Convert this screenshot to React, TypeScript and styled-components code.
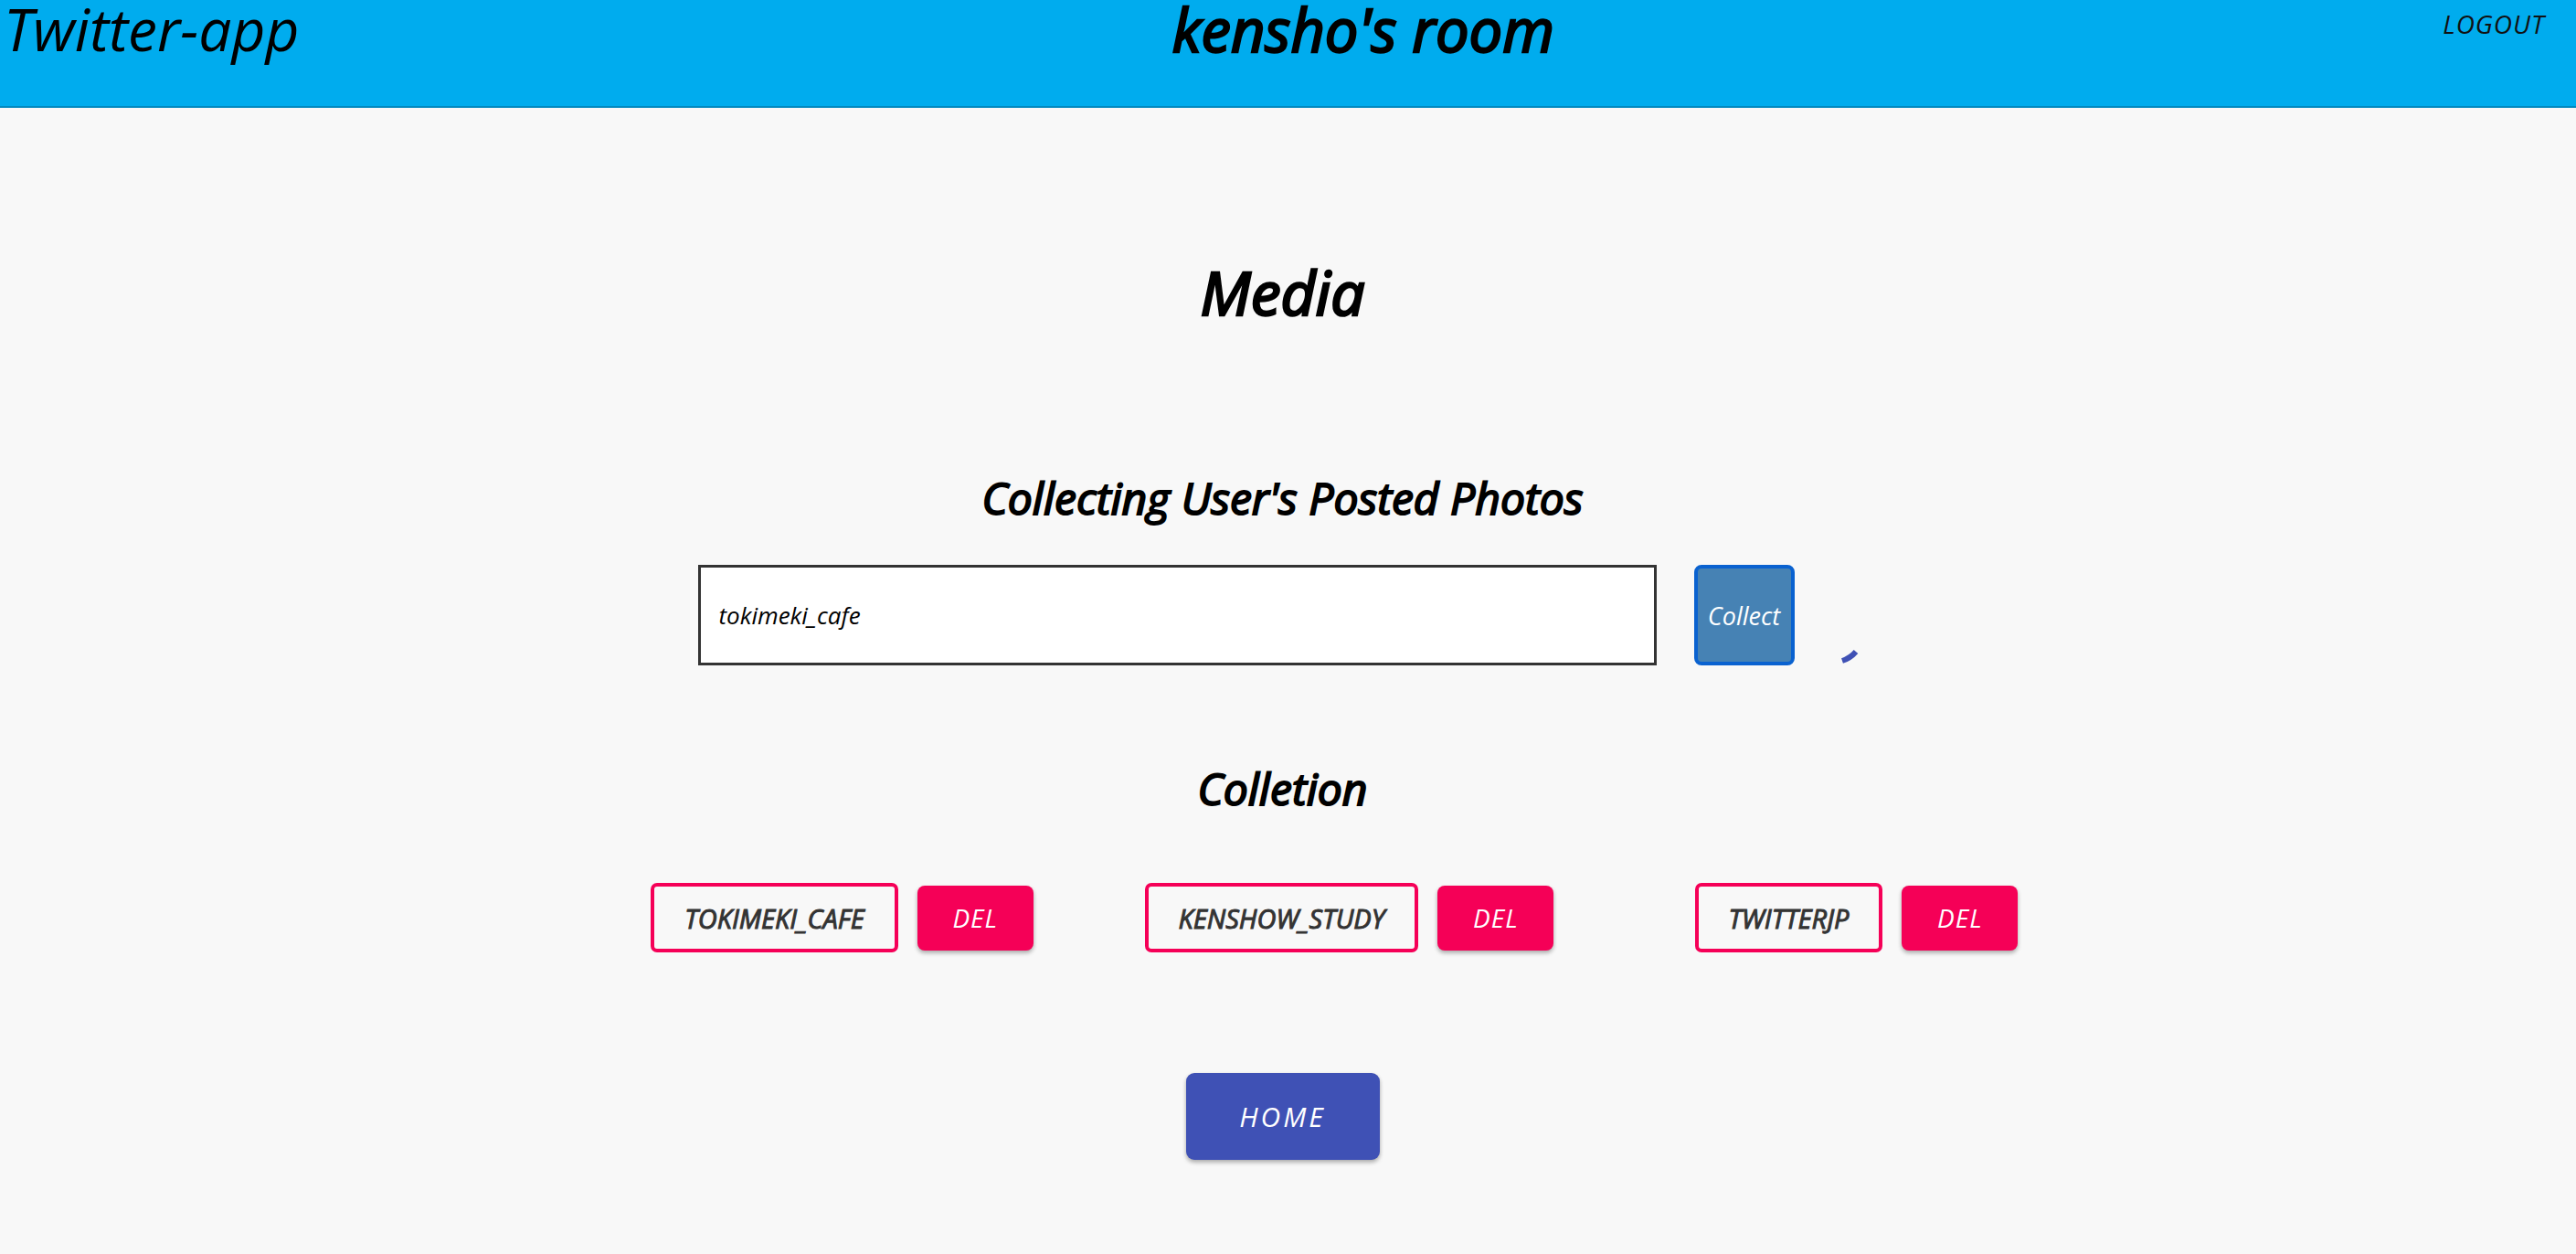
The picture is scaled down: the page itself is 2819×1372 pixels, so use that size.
import styled, { createGlobalStyle } from "styled-components";

const GlobalStyle = createGlobalStyle`
  html, body {
    margin: 0;
    padding: 0;
    background: #f8f8f8;
  }
  body {
    font-family: "Open Sans", "Noto Sans", sans-serif;
    font-style: italic;
    color: #000;
  }
`;

// the page's bold is a faux bold: regular widths, thicker strokes
const fauxBold = (w: number) => `
  font-weight: 400;
  -webkit-text-stroke: ${w}px currentColor;
`;

const Header = styled.header`
  display: flex;
  justify-content: space-between;
  align-items: flex-start;
  height: 116px;
  background: #00acee;
  border-bottom: 2px solid #0289bf;
`;

const AppName = styled.div`
  font-size: 64px;
  line-height: 1;
  padding-left: 4px;
`;

const RoomTitle = styled.div`
  font-size: 65px;
  line-height: 1;
  ${fauxBold(2.4)}
`;

const LogoutButton = styled.button`
  background: none;
  border: none;
  font-family: inherit;
  font-style: italic;
  font-size: 28px;
  line-height: 1;
  color: #111;
  letter-spacing: 1px;
  padding: 12px 34px 8px 17px;
  cursor: pointer;
`;

const Main = styled.main`
  display: flex;
  flex-direction: column;
  align-items: center;
  padding-right: 12px;
  padding-bottom: 100px;
`;

const PageTitle = styled.h1`
  margin: 168px 0 0;
  font-size: 66px;
  line-height: 1;
  ${fauxBold(2.6)}
`;

const SectionTitle = styled.h2<{ $top: number }>`
  margin: ${(p) => p.$top}px 0 0;
  font-size: 48px;
  line-height: 1;
  ${fauxBold(2)}
`;

const CollectRow = styled.div`
  display: flex;
  align-items: stretch;
  margin-top: 49px;
  height: 110px;
`;

const NameInput = styled.input`
  box-sizing: border-box;
  width: 1049px;
  height: 110px;
  border: 3px solid #333;
  background: #fff;
  padding: 0 20px;
  font-family: "Open Sans", "Noto Sans", sans-serif;
  font-style: italic;
  font-size: 26px;
  color: #000;
  outline: none;
`;

const CollectButton = styled.button`
  box-sizing: border-box;
  width: 110px;
  height: 110px;
  margin-left: 41px;
  background: #4682b4;
  border: 4px solid #0a62d0;
  border-radius: 8px;
  color: #fff;
  font-family: inherit;
  font-style: italic;
  font-size: 27px;
  padding: 0;
`;

const Spinner = styled.svg`
  width: 80px;
  height: 110px;
`;

const ChipGrid = styled.div`
  display: grid;
  grid-template-columns: repeat(3, 555px);
  margin-top: 79px;
  margin-left: 146px;
`;

const ChipCell = styled.div`
  display: flex;
  align-items: center;
  justify-content: center;
  gap: 21px;
`;

const UserChip = styled.div`
  box-sizing: border-box;
  height: 76px;
  display: flex;
  align-items: center;
  padding: 0 33px;
  border: 4px solid #f50057;
  border-radius: 7px;
  color: #333;
  font-size: 29px;
  text-transform: uppercase;
  ${fauxBold(1)}
`;

const DelButton = styled.button`
  width: 127px;
  height: 71px;
  border: none;
  border-radius: 8px;
  background: #f50057;
  color: #fff;
  font-family: inherit;
  font-style: italic;
  font-size: 28px;
  letter-spacing: 1px;
  box-shadow: 0 3px 5px rgba(0, 0, 0, 0.2), 0 2px 4px rgba(0, 0, 0, 0.14);
`;

const HomeButton = styled.button`
  width: 212px;
  height: 95px;
  margin-top: 132px;
  border: none;
  border-radius: 9px;
  background: #3f51b5;
  color: #fff;
  font-family: inherit;
  font-style: italic;
  font-size: 30px;
  letter-spacing: 3px;
  box-shadow: 0 3px 5px rgba(0, 0, 0, 0.2), 0 2px 4px rgba(0, 0, 0, 0.14);
`;

const users = ["tokimeki_cafe", "kenshow_study", "twitterjp"];

export default function App() {
  return (
    <>
      <GlobalStyle />
      <Header>
        <AppName>Twitter-app</AppName>
        <RoomTitle>kensho's room</RoomTitle>
        <LogoutButton>LOGOUT</LogoutButton>
      </Header>
      <Main>
        <PageTitle>Media</PageTitle>
        <SectionTitle $top={169}>Collecting User's Posted Photos</SectionTitle>
        <CollectRow>
          <NameInput defaultValue="tokimeki_cafe" />
          <CollectButton>Collect</CollectButton>
          <Spinner viewBox="0 0 80 110">
            <path d="M52 105 Q61 102 67 95" stroke="#3f51b5" strokeWidth="6" fill="none" />
          </Spinner>
        </CollectRow>
        <SectionTitle $top={111}>Colletion</SectionTitle>
        <ChipGrid>
          {users.map((u) => (
            <ChipCell key={u}>
              <UserChip>{u}</UserChip>
              <DelButton>DEL</DelButton>
            </ChipCell>
          ))}
        </ChipGrid>
        <HomeButton>HOME</HomeButton>
      </Main>
    </>
  );
}
